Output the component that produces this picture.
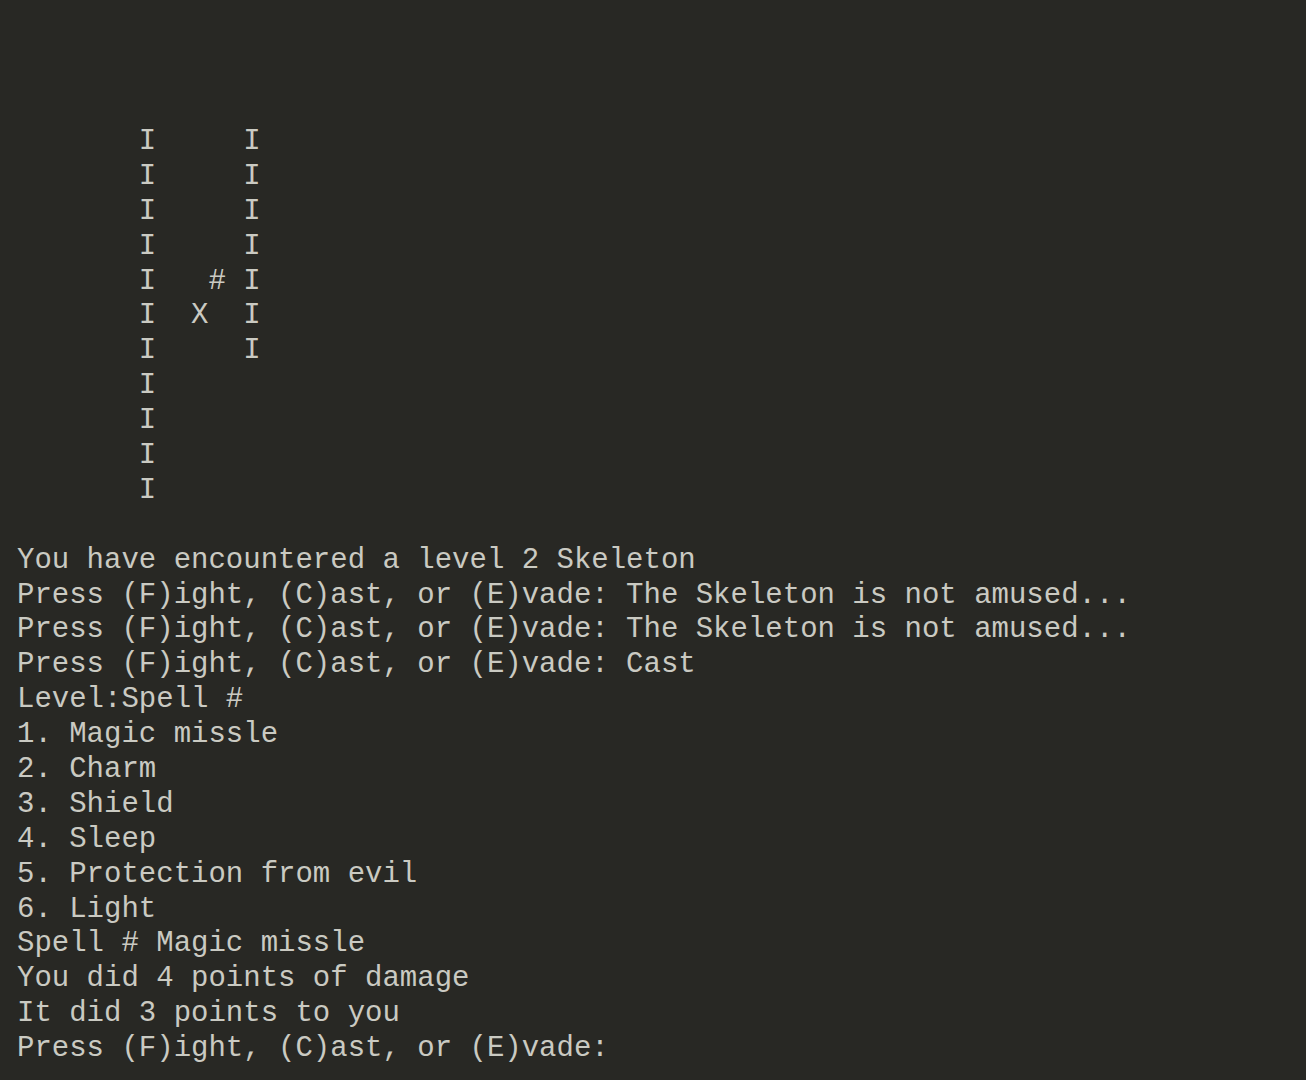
import React from "react";

const lines = [
  "       I     I",
  "       I     I",
  "       I     I",
  "       I     I",
  "       I   # I",
  "       I  X  I",
  "       I     I",
  "       I",
  "       I",
  "       I",
  "       I",
  "",
  "You have encountered a level 2 Skeleton",
  "Press (F)ight, (C)ast, or (E)vade: The Skeleton is not amused...",
  "Press (F)ight, (C)ast, or (E)vade: The Skeleton is not amused...",
  "Press (F)ight, (C)ast, or (E)vade: Cast",
  "Level:Spell #",
  "1. Magic missle",
  "2. Charm",
  "3. Shield",
  "4. Sleep",
  "5. Protection from evil",
  "6. Light",
  "Spell # Magic missle",
  "You did 4 points of damage",
  "It did 3 points to you",
  "Press (F)ight, (C)ast, or (E)vade:",
];

export default function App() {
  return (
    <div className="w-[1306px] h-[1080px] overflow-hidden bg-[#282824] text-[#cacac2] pl-[17px] pt-[125px] font-['Liberation_Mono','DejaVu_Sans_Mono',monospace] text-[29px] leading-[34.9px]">
      {lines.map((l, i) => (
        <div key={i} className="whitespace-pre h-[34.9px]">
          {l}
        </div>
      ))}
    </div>
  );
}
